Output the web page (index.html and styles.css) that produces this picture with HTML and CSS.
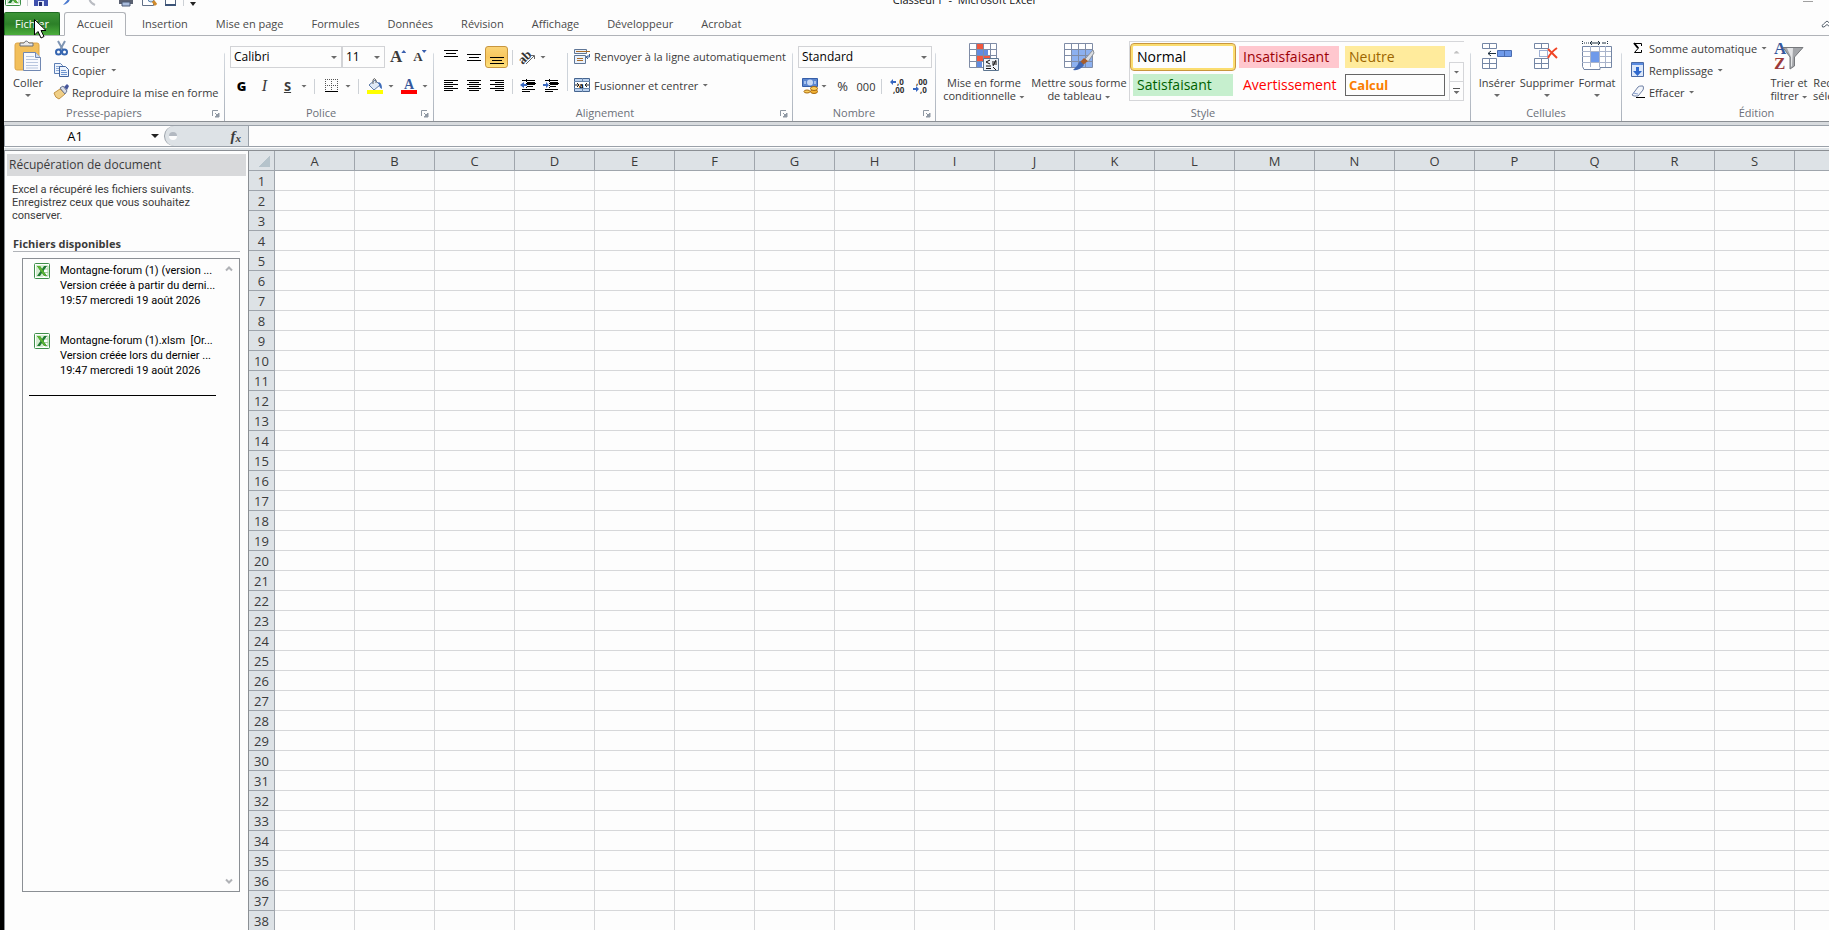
FILE: index.html
```html
<!DOCTYPE html>
<html lang="fr">
<head>
    <meta charset="UTF-8">
    <meta name="viewport" content="width=device-width, initial-scale=1.0">
    <title>Classeur1 - Microsoft Excel</title>
    <link rel="stylesheet" href="styles.css">
</head>
<body>
    <!-- shared icons -->
    <svg class="symbols" width="0" height="0">
        <symbol id="excel" viewBox="0 0 16 16">
            <rect x="0.5" y="0.5" width="15" height="15" rx="1" fill="#fff" stroke="#3f8f4a"/>
            <path d="M2 2h9L9 14H2z" fill="#d5edd0"/>
            <path d="M11 3h3v10h-3M11 6h3M11 9.500h3" fill="none" stroke="#a5d3a0"/>
            <path d="M3 3h3l2 3 2-3h3L9.500 8l3.500 5h-3L8 10l-2 3H3l3.500-5z" fill="#1f7a33"/>
            <path d="M3 3h3l6.500 10h-2z" fill="#5cb531"/>
        </symbol>
        <symbol id="launcher" viewBox="0 0 8 8">
            <path d="M0.500 6V0.500H6" fill="none" stroke="#8f98a3"/>
            <path d="M3 3l3 3M7 3v4H3z" fill="#8f98a3" stroke="#8f98a3"/>
        </symbol>
    </svg>

    <header class="title-bar">
        <div class="quick-access">
            <svg width="16" height="16"><use href="#excel"/></svg>
            <span class="sep"></span>
            <svg class="save" width="14" height="16"><path d="M0 2h14v14H0z" fill="#3f51ad"/><path d="M3 2h8v7H3zM4 11h6v5H4z" fill="#dfe6fa"/><path d="M5 12h3v4H5z" fill="#26306e"/></svg>
            <svg class="undo" width="14" height="16"><path d="M3 15q8-2 7-9l-3 1 2-5 5 3-3 1" fill="#4a79cf"/></svg>
            <svg class="redo" width="14" height="16"><path d="M9 15Q2 12 4 6" fill="none" stroke="#b9bcc2" stroke-width="2"/></svg>
            <svg class="print" width="16" height="16"><path d="M1 8h14v6H1z" fill="#5a6070"/><path d="M4 3h8v7H4z" fill="#dfe3ea"/><path d="M4 12h8v4H4z" fill="#a9bcdc" stroke="#4a5875"/></svg>
            <svg class="preview" width="15" height="16"><path d="M0.500 1.500h11v14H0.500z" fill="#fff" stroke="#627087"/><circle cx="9" cy="9" r="3" fill="#cfe2f4" stroke="#5f84ad"/><path d="M11 11l3 4" stroke="#d08a2c" stroke-width="3"/></svg>
            <svg class="new-doc" width="12" height="16"><path d="M0.500 1.500h10v14H0.500z" fill="#fff" stroke="#536580"/><path d="M0 15h11" stroke="#3c5478" stroke-width="2"/></svg>
            <span class="sep"></span>
            <span class="arrow dark"></span>
        </div>
        <div class="window-title">Classeur1&nbsp; -&nbsp; Microsoft Excel</div>
        <div class="window-buttons"><span class="minimize"></span></div>
    </header>

    <nav class="tabs">
        <button class="file-tab">Fichier</button>
        <button class="tab active">Accueil</button>
        <button class="tab">Insertion</button>
        <button class="tab">Mise en page</button>
        <button class="tab">Formules</button>
        <button class="tab">Données</button>
        <button class="tab">Révision</button>
        <button class="tab">Affichage</button>
        <button class="tab">Développeur</button>
        <button class="tab">Acrobat</button>
        <button class="collapse" aria-label="Réduire le ruban"><svg width="12" height="10"><path d="M1.500 8q-1-2 1-3L6 2l3.500 3q2 1 1 3L9 8 6 5.500 3 8z" fill="#fff" stroke="#55606c"/></svg></button>
    </nav>
    <svg class="cursor" width="13" height="20"><path d="M0.500 0.500v15.500l3.500-3.500 3 6.500 3-1.500-3-6h5z" fill="#fff" stroke="#000"/></svg>

    <section class="ribbon">
        <!-- Presse-papiers -->
        <div class="group clipboard">
            <div class="group-body">
                <button class="big">
                    <svg width="30" height="32" viewBox="0 0 30 32">
                        <rect x="2" y="3" width="24" height="27" rx="2" fill="#f2bf5b" stroke="#dca548"/>
                        <path d="M7 6V3h4q2-4 5 0h4v3z" fill="#e9e9ea" stroke="#6b6f75"/>
                        <path d="M10.500 12.500h12l5 5v13h-17z" fill="#f8fafe" stroke="#7188b2"/>
                        <path d="M22.500 12.500v5h5" fill="#cfdcf0" stroke="#7188b2"/>
                        <path d="M13 16.500h8M13 19.500h12M13 22.500h12M13 25.500h12M13 28h12" stroke="#b8c6de"/>
                    </svg>
                    <span>Coller</span><span class="arrow"></span>
                </button>
                <div class="stack">
                    <button class="small">
                        <svg width="16" height="16"><path d="M4 1l5 9M11 1L6 10" stroke="#7f95b3" stroke-width="2"/><circle cx="4.500" cy="12" r="2.500" fill="none" stroke="#3565b0" stroke-width="2"/><circle cx="10.500" cy="12" r="2.500" fill="none" stroke="#3565b0" stroke-width="2"/></svg>
                        Couper
                    </button>
                    <button class="small">
                        <svg width="16" height="16"><path d="M0.500 1.500h6l2 2v8h-8z" fill="#eef4fd" stroke="#5d7fb5"/><path d="M2 4.500h4M2 6.500h4M2 8.500h4" stroke="#8eabd6"/><path d="M5.500 4.500h6l3 3v7h-9z" fill="#eef4fd" stroke="#41649f"/><path d="M7 8.500h5M7 10.500h6M7 12.500h6" stroke="#6e95d0"/></svg>
                        Copier <span class="arrow"></span>
                    </button>
                    <button class="small">
                        <svg width="16" height="16"><path d="M0 9l6-4 5 5-6 5q-4-1-5-6z" fill="#f0cf86" stroke="#c39447"/><path d="M6 4l3-2 4 5-2 3z" fill="#d9dde6" stroke="#6c7791"/><path d="M10 3l3-3 2 2-2 4z" fill="#46569b"/></svg>
                        Reproduire la mise en forme
                    </button>
                </div>
            </div>
            <div class="group-label">Presse-papiers<svg class="launcher" width="8" height="8"><use href="#launcher"/></svg></div>
        </div>

        <!-- Police -->
        <div class="group font">
            <div class="group-body rows">
                <div class="row">
                    <label class="combo font-name"><select aria-label="Police"><option>Calibri</option></select></label>
                    <label class="combo font-size"><select aria-label="Taille"><option>11</option></select></label>
                    <button class="glyph grow">A<span class="up"></span></button>
                    <button class="glyph shrink">A<span class="down"></span></button>
                </div>
                <div class="row">
                    <button class="icon bold">G</button>
                    <button class="icon italic">I</button>
                    <button class="icon underline">S</button>
                    <span class="arrow"></span>
                    <span class="sep"></span>
                    <button class="icon borders"><svg width="14" height="14"><path d="M0.500 0v12M6.500 0v12M12.500 0v12M0 0.500h13M0 6.500h13" fill="none" stroke="#555" stroke-dasharray="1 1"/><path d="M0 12.500h13" stroke="#000"/></svg></button>
                    <span class="arrow"></span>
                    <span class="sep"></span>
                    <button class="icon fill"><svg width="16" height="16"><path d="M2 7l6-5 5 5-6 5z" fill="#dfe9f6" stroke="#5e7ba8"/><path d="M6 6V2q1-3 3 0v3" fill="none" stroke="#666"/><path d="M11 4q4 0 4 7-3-1-3-5z" fill="#3e6cb9"/><path d="M0 12h16v4H0z" fill="#ff0"/></svg></button>
                    <span class="arrow"></span>
                    <button class="icon color"><svg width="16" height="16"><text x="3" y="11" class="letter-a">A</text><path d="M0 12h16v4H0z" fill="#f00"/></svg></button>
                    <span class="arrow"></span>
                </div>
            </div>
            <div class="group-label">Police<svg class="launcher" width="8" height="8"><use href="#launcher"/></svg></div>
        </div>

        <!-- Alignement -->
        <div class="group alignment">
            <div class="group-body">
                <div class="align-icons">
                    <div class="row">
                        <button class="icon"><svg width="14" height="16"><path d="M0 1.500h14M2 4.500h10M0 7.500h14" stroke="#000"/></svg></button>
                        <button class="icon"><svg width="14" height="16"><path d="M0 5.500h14M2 8.500h10M0 11.500h14" stroke="#000"/></svg></button>
                        <button class="icon selected"><svg width="14" height="16"><path d="M0 8.500h14M2 11.500h10M0 14.500h14" stroke="#000"/></svg></button>
                        <span class="sep"></span>
                        <button class="icon angle"><svg width="16" height="16"><text x="-2" y="11" class="ab" transform="rotate(-45 6 9)">ab</text><path d="M5 15l8-8M10 6.500h3.500V10" fill="none" stroke="#666"/></svg></button>
                        <span class="arrow"></span>
                    </div>
                    <div class="row">
                        <button class="icon"><svg width="14" height="14"><path d="M0 1.500h14M0 3.500h9M0 5.500h14M0 7.500h9M0 9.500h14M0 11.500h9" stroke="#000"/></svg></button>
                        <button class="icon"><svg width="14" height="14"><path d="M0 1.500h14M2 3.500h10M0 5.500h14M2 7.500h10M0 9.500h14M2 11.500h10" stroke="#000"/></svg></button>
                        <button class="icon"><svg width="14" height="14"><path d="M0 1.500h14M5 3.500h9M0 5.500h14M5 7.500h9M0 9.500h14M5 11.500h9" stroke="#000"/></svg></button>
                        <span class="sep"></span>
                        <button class="icon"><svg width="16" height="14"><path d="M2 1.500h13M7 4.500h9M7 7.500h6M2 10.500h13M2 12.500h8" stroke="#000"/><path d="M6.500 0v14" stroke="#000" stroke-dasharray="1 1"/><path d="M7 3h8v3H7z"/><path d="M0 6l4-3v2h3v2H4v2z" fill="#3767c0"/></svg></button>
                        <button class="icon"><svg width="16" height="14"><path d="M2 1.500h13M7 4.500h9M7 7.500h6M2 10.500h13M2 12.500h8" stroke="#000"/><path d="M6.500 0v14" stroke="#000" stroke-dasharray="1 1"/><path d="M7 3h8v3H7z"/><path d="M6 6L3 3v2H0v2h3v2z" fill="#3767c0"/></svg></button>
                    </div>
                </div>
                <div class="align-texts">
                    <button class="small">
                        <svg width="16" height="16"><path d="M0.500 1.500h12v4H0.500zM0.500 7.500h11v8H0.500z" fill="#eaf1fb" stroke="#5f7697"/><path d="M2 3.500h14M3 10.500h6M3 12.500h6" stroke="#a86c2a"/><path d="M15.500 6v3h-3m2-1.500L12 9l2 2" fill="none" stroke="#345892"/></svg>
                        Renvoyer à la ligne automatiquement
                    </button>
                    <button class="small">
                        <svg width="16" height="16"><path d="M0.500 1.500h15v13H0.500z" fill="#b9d0ee" stroke="#46658f"/><path d="M1 5h14v6H1z" fill="#fff"/><path d="M0 4.500h16M0 11.500h16M8.500 1v3M8.500 12v3" stroke="#6987ae"/><path d="M1 8h4M3 6l2 2-2 2M15 8h-4M13 6l-2 2 2 2" fill="none" stroke="#222"/><text x="5" y="11" class="tiny-a">a</text></svg>
                        Fusionner et centrer <span class="arrow"></span>
                    </button>
                </div>
            </div>
            <div class="group-label">Alignement<svg class="launcher" width="8" height="8"><use href="#launcher"/></svg></div>
        </div>

        <!-- Nombre -->
        <div class="group number">
            <div class="group-body rows">
                <div class="row">
                    <label class="combo"><select aria-label="Format de nombre"><option>Standard</option></select></label>
                </div>
                <div class="row">
                    <button class="icon money"><svg width="16" height="16"><path d="M0.500 0.500h15v8H0.500z" fill="#5c86cf" stroke="#355ea8"/><circle cx="8" cy="4.500" r="3" fill="#c7d9f5"/><path d="M2 3h2v3H2zM12 3h2v3h-2z" fill="#a7c2ec"/><ellipse cx="12" cy="13.500" rx="3.500" ry="2" fill="#f2b233" stroke="#a8690f"/><ellipse cx="12" cy="10.500" rx="3.500" ry="2" fill="#fbd05e" stroke="#a8690f"/><ellipse cx="5" cy="13.500" rx="3" ry="1.500" fill="#fbd05e" stroke="#a8690f"/></svg></button>
                    <span class="arrow"></span>
                    <button class="icon percent">%</button>
                    <button class="icon thousands">000</button>
                    <span class="sep"></span>
                    <button class="icon"><svg width="16" height="16"><text x="7" y="7" class="digits">,0</text><text x="3" y="15" class="digits">,00</text><path d="M0 4l3-3v2h3v2H3v2z" fill="#3767c0"/></svg></button>
                    <button class="icon"><svg width="16" height="16"><text x="3" y="7" class="digits">,00</text><text x="7" y="15" class="digits">,0</text><path d="M6 11L3 8v2H0v2h3v2z" fill="#3767c0"/></svg></button>
                </div>
            </div>
            <div class="group-label">Nombre<svg class="launcher" width="8" height="8"><use href="#launcher"/></svg></div>
        </div>

        <!-- Style -->
        <div class="group style">
            <div class="group-body">
                <button class="big cond">
                    <svg width="30" height="32" viewBox="0 0 30 32">
                        <path d="M0.500 3.500h27v24h-27z" fill="#fff"/>
                        <path d="M7 3h7v6H7zM7 15h14v6H7z" fill="#f2583e"/><path d="M7 9h12v6H7zM7 21h6v7H7z" fill="#628ce0"/>
                        <path d="M0.500 3.500h27v24h-27zM7.500 3v24M14.500 3v24M21.500 3v24M0 9.500h28M0 15.500h28M0 21.500h28" fill="none" stroke="#7f8ca6"/>
                        <path d="M14.500 18.500h15v12h-15z" fill="#eef3f8" stroke="#5c7590"/>
                        <path d="M21 20l-4 2 4 2M17 26h5M17 28.500h5M23 22h5M23 24h5M27 20l-3 6M24 27l3 3" fill="none" stroke="#111"/>
                    </svg>
                    <span>Mise en forme</span><span>conditionnelle <i class="arrow"></i></span>
                </button>
                <button class="big table-style">
                    <svg width="30" height="32" viewBox="0 0 30 32">
                        <path d="M0.500 3.500h28v24h-28z" fill="#fff"/>
                        <path d="M7 9h21v18H7z" fill="#8cb0ef"/>
                        <path d="M0.500 3.500h28v24h-28zM7.500 3v24M14.500 3v24M21.500 3v24M0 9.500h28M0 15.500h28M0 21.500h28" fill="none" stroke="#7f8ca6"/>
                        <path d="M29 10l-8 9 3 3 6-9z" fill="#dadde2" stroke="#8b9097"/>
                        <path d="M20 18l-4 4 3 3 5-4z" fill="#a65c2a"/><path d="M16 21l4 4q-4 6-11 5 4-3 7-9z" fill="#3f67b4"/>
                    </svg>
                    <span>Mettre sous forme</span><span>de tableau <i class="arrow"></i></span>
                </button>
                <div class="gallery">
                    <div class="cells">
                        <button class="cell normal">Normal</button>
                        <button class="cell bad">Insatisfaisant</button>
                        <button class="cell neutral">Neutre</button>
                        <button class="cell good">Satisfaisant</button>
                        <button class="cell warning">Avertissement</button>
                        <button class="cell calc">Calcul</button>
                    </div>
                    <div class="scroll">
                        <button class="off" aria-label="Précédent"><span class="arrow flip"></span></button>
                        <button aria-label="Suivant"><span class="arrow"></span></button>
                        <button class="more" aria-label="Autres"><span class="arrow"></span></button>
                    </div>
                </div>
            </div>
            <div class="group-label">Style</div>
        </div>

        <!-- Cellules -->
        <div class="group cellules">
            <div class="group-body">
                <button class="big">
                    <svg width="30" height="32" viewBox="0 0 30 32"><path d="M0.500 3.500h14v5H0.500zM7.500 3v5M0.500 18.500h14v10H0.500zM7.500 18v10M0 23.500h14" fill="#fff" stroke="#7486a5"/><path d="M15.500 10.500h14v6h-14z" fill="#6f9aea" stroke="#4a6cb0"/><path d="M22.500 11v5" stroke="#4a6cb0"/><path d="M6 13.500h8M9 11l-3 2.500L9 16" fill="none" stroke="#1d3040"/></svg>
                    <span>Insérer</span><span class="arrow"></span>
                </button>
                <button class="big">
                    <svg width="30" height="32" viewBox="0 0 30 32"><path d="M2.500 3.500h14v5H2.500zM9.500 3v5M2.500 18.500h14v10H2.500zM9.500 18v10M2 23.500h14" fill="#fff" stroke="#7486a5"/><path d="M7.500 10.500h8v6h-8z" fill="none" stroke="#3e62aa" stroke-dasharray="1 1"/><path d="M16 9l9 9M25 8q-6 4-9 10" fill="none" stroke="#f04526" stroke-width="2"/></svg>
                    <span>Supprimer</span><span class="arrow"></span>
                </button>
                <button class="big">
                    <svg width="30" height="32" viewBox="0 0 30 32"><path d="M0.500 6.500h29v21H18v2H2l-1.500-3z" fill="#fff" stroke="#7486a5"/><path d="M0 11.500h29M0 22.500h29M8.500 6v21M17.500 6v21M23.500 6v21M0 16.500h29" stroke="#a9b4cb"/><path d="M9 12h8v10H9z" fill="#6f9aea"/><path d="M0.500 1v4M25.500 1v4M2 3h5" stroke="#1d3040" stroke-dasharray="1 1"/><path d="M8 3h10M10 1L8 3l2 2M16 1l2 2-2 2M20 3h4" fill="none" stroke="#1d3040"/></svg>
                    <span>Format</span><span class="arrow"></span>
                </button>
            </div>
            <div class="group-label">Cellules</div>
        </div>

        <!-- Édition -->
        <div class="group edition">
            <div class="group-body">
                <div class="stack">
                    <button class="small"><svg width="14" height="16"><path d="M10.500 6V3.500h-7L7.500 8l-4 4.500h7V10" fill="none" stroke="#000"/><path d="M3 3l4 5" stroke="#000" stroke-width="2"/></svg>Somme automatique <span class="arrow"></span></button>
                    <button class="small"><svg width="14" height="16"><path d="M0.500 0.500h12v14H0.500z" fill="#dce8fa" stroke="#4a6aa5"/><path d="M1 1h11v2H1z" fill="#5a8be0"/><path d="M5 5h3v4h3l-4.500 5L2 9h3z" fill="#2f69cd"/></svg>Remplissage <span class="arrow"></span></button>
                    <button class="small"><svg width="14" height="16"><path d="M1 11l6-8q1-1 3-1h2q1 2 0 4l-5 6H3z" fill="#f3f6fb" stroke="#6f80a4"/><path d="M2 9l5 1" stroke="#8ca3d0"/><path d="M5 13.500h9" stroke="#000"/></svg>Effacer <span class="arrow"></span></button>
                </div>
                <button class="big sort">
                    <svg width="30" height="32" viewBox="0 0 30 32"><text x="0" y="14" class="sort-a">A</text><text x="0" y="29" class="sort-z">Z</text><path d="M9 7.500h20L20.500 17v9L16 29V17z" fill="#a4a6aa" stroke="#77797d"/><path d="M13 8h6l-1 18-1 1V17z" fill="#e3e4e6"/></svg>
                    <span>Trier et</span><span>filtrer <i class="arrow"></i></span>
                </button>
                <button class="big find">
                    <svg width="30" height="32"></svg>
                    <span>Rechercher et</span><span>sélectionner <i class="arrow"></i></span>
                </button>
            </div>
            <div class="group-label">Édition</div>
        </div>
    </section>

    <div class="formula-bar">
        <input class="name-box" aria-label="Zone Nom" value="A1">
        <span class="arrow dark"></span>
        <div class="fx"><span class="knob"></span><i>f</i><i class="x">x</i></div>
        <input class="formula" aria-label="Barre de formule">
    </div>

    <main class="workspace">
        <aside class="recovery">
            <h2>Récupération de document</h2>
            <p>Excel a récupéré les fichiers suivants. Enregistrez ceux que vous souhaitez conserver.</p>
            <h3>Fichiers disponibles</h3>
            <div class="file-list">
                <div class="files">
                    <div class="file">
                        <svg width="16" height="16"><use href="#excel"/></svg>
                        <div>Montagne-forum (1) (version ...<br>Version créée à partir du derni...<br>19:57 mercredi 19 août 2026</div>
                    </div>
                    <div class="file">
                        <svg width="16" height="16"><use href="#excel"/></svg>
                        <div>Montagne-forum (1).xlsm&nbsp; [Or...<br>Version créée lors du dernier ...<br>19:47 mercredi 19 août 2026</div>
                    </div>
                    <hr>
                </div>
                <div class="list-scroll">
                    <svg width="8" height="8"><path d="M1 5.500l3-3 3 3" fill="none" stroke="#b0b2b6" stroke-width="2"/></svg>
                    <svg width="8" height="8"><path d="M1 2.500l3 3 3-3" fill="none" stroke="#b0b2b6" stroke-width="2"/></svg>
                </div>
            </div>
        </aside>
        <div class="sheet">
            <table>
                <thead><tr id="letters"><th class="corner"></th></tr></thead>
                <tbody id="rows"></tbody>
            </table>
        </div>
    </main>
    <script src="script.js"></script>
</body>
</html>
```
FILE: styles.css
```css
* {
    box-sizing: border-box;
}

body {
    margin: 0;
    height: 100vh;
    display: flex;
    flex-direction: column;
    overflow: hidden;
    border-left: 4px solid #000;
    background-color: #fdfdfd;
    color: #3b3b3b;
    font-family: "Open Sans", "Noto Sans", sans-serif;
    font-size: 11px;
}

button, input, select {
    font: inherit;
    color: inherit;
    background: none;
    border: none;
    padding: 0;
    margin: 0;
    border-radius: 0;
    outline: none;
}

svg {
    display: block;
    flex: none;
    overflow: visible;
}

.symbols {
    position: absolute;
}

.arrow {
    display: inline-block;
    flex: none;
    width: 6px;
    height: 3px;
    background-color: #6b6b6b;
    clip-path: polygon(0 0, 100% 0, 50% 100%);
    vertical-align: middle;
}

.arrow.dark {
    background-color: #222;
    width: 8px;
    height: 4px;
}

.arrow.flip {
    clip-path: polygon(50% 0, 100% 100%, 0 100%);
}

.sep {
    flex: none;
    width: 1px;
    height: 15px;
    background-color: #cdd1d6;
}

/* title bar */
.title-bar {
    display: flex;
    align-items: flex-end;
    height: 12px;
    flex: none;
}

.quick-access {
    display: flex;
    align-items: center;
    width: 196px;
    height: 16px;
    margin-bottom: 6px;
    padding-left: 1px;
    flex: none;
}

.quick-access .sep {
    margin: 0 6px;
}

.quick-access .undo,
.quick-access .redo {
    margin-left: 12px;
}

.quick-access .print {
    margin-left: 18px;
}

.quick-access .preview,
.quick-access .new-doc {
    margin-left: 8px;
}

.quick-access .arrow {
    width: 6px;
    margin-top: 12px;
}

.window-title {
    flex: 1;
    text-align: center;
    color: #111;
    font-size: 11px;
    line-height: 16px;
    margin-bottom: 4px;
}

.window-buttons {
    width: 101px;
    height: 12px;
    padding: 1px 0 0 75px;
}

.minimize {
    display: block;
    width: 10px;
    height: 1px;
    background-color: #a0a0a0;
}

/* tabs */
.tabs {
    display: flex;
    height: 24px;
    flex: none;
    border-bottom: 1px solid #b0b3b8;
}

.file-tab {
    width: 56px;
    height: 23px;
    padding-bottom: 1px;
    border: 1px solid #1f6b22;
    border-bottom: none;
    border-radius: 2px 2px 0 0;
    background: linear-gradient(#3d9438, #2c8028 50%, #4cae3c);
    color: #fff;
    margin-right: 4px;
}

.tab {
    height: 24px;
    padding: 0 14px 2px;
    color: #4a4a4a;
}

.tab.active {
    padding: 0 12px 2px;
    margin-right: 2px;
    border: 1px solid #b0b3b8;
    border-bottom-color: #fdfdfd;
    border-radius: 3px 3px 0 0;
    background-color: #fdfdfd;
}

.collapse {
    margin-left: auto;
    margin-right: -4px;
}

.cursor {
    position: absolute;
    left: 34px;
    top: 19px;
}

/* ribbon */
.ribbon {
    display: flex;
    flex: none;
    height: 86px;
    border-bottom: 1px solid #8b8f94;
    overflow: hidden;
}

.group {
    display: flex;
    flex-direction: column;
    flex: none;
    border-right: 1px solid;
    border-image: linear-gradient(transparent 20%, #d5dae0 22%, #a9b0ba) 1;
}

.clipboard { width: 221px; }
.font { width: 209px; }
.alignment { width: 359px; }
.number { width: 143px; }
.style { width: 535px; }
.cellules { width: 151px; }
.edition { width: 270px; }

.group-body {
    display: flex;
    height: 68px;
}

.group-label {
    display: flex;
    align-items: center;
    justify-content: center;
    position: relative;
    height: 16px;
    padding-right: 16px;
    color: #6c7079;
}

.style .group-label,
.cellules .group-label,
.edition .group-label {
    padding-right: 0;
}

.launcher {
    position: absolute;
    right: 4px;
    top: 6px;
}

.big {
    display: flex;
    flex-direction: column;
    align-items: center;
    padding-top: 4px;
    line-height: 13px;
    white-space: nowrap;
    flex: none;
}

.big svg {
    margin-bottom: 4px;
}

.big > .arrow {
    margin-top: 5px;
}

.stack {
    display: flex;
    flex-direction: column;
    padding-top: 1px;
}

.small {
    display: flex;
    align-items: center;
    gap: 4px;
    height: 22px;
    white-space: nowrap;
}

.rows {
    flex-direction: column;
}

.row {
    display: flex;
    align-items: center;
    height: 22px;
}

.rows,
.align-icons,
.align-texts {
    display: flex;
    flex-direction: column;
    gap: 7px;
    padding-top: 10px;
}

.align-texts .small {
    padding-bottom: 2px;
}

.clipboard .big {
    width: 42px;
    padding-left: 6px;
}

.clipboard .stack {
    padding-left: 8px;
}

.clipboard .small {
    gap: 2px;
}

.clipboard .small .arrow {
    margin-left: 3px;
}

.clipboard .group-label,
.number .group-label {
    padding-right: 20px;
}

/* fonts */
.font .row {
    padding-left: 5px;
}

.combo {
    position: relative;
    display: flex;
    height: 22px;
    border: 1px solid #d2d3d6;
    color: #000;
}

.combo select {
    appearance: none;
    width: 100%;
    padding: 0 3px 1px;
    font-size: 12px;
}

.combo::after {
    content: "";
    position: absolute;
    right: 4px;
    top: 9px;
    width: 6px;
    height: 3px;
    background-color: #6b6b6b;
    clip-path: polygon(0 0, 100% 0, 50% 100%);
}

.font-name { width: 112px; }
.font-size { width: 43px; }
.number .combo { width: 134px; }

.glyph {
    position: relative;
    font-family: "Liberation Serif", serif;
    font-weight: bold;
    line-height: 22px;
}

.grow {
    font-size: 17px;
    margin-left: 5px;
}

.shrink {
    font-size: 13px;
    margin-left: 11px;
}

.up,
.down {
    position: absolute;
    top: 4px;
    right: -4px;
    width: 5px;
    height: 3px;
    background-color: #3a5fae;
    clip-path: polygon(50% 0, 100% 100%, 0 100%);
}

.down {
    clip-path: polygon(0 0, 100% 0, 50% 100%);
}

.icon {
    display: flex;
    align-items: center;
    justify-content: center;
    width: 23px;
    height: 22px;
    flex: none;
}

.bold {
    color: #000;
    font-size: 13px;
    font-weight: 800;
}

.italic {
    font-family: "Liberation Serif", serif;
    font-size: 16px;
    font-style: italic;
}

.underline {
    font-size: 13px;
    font-weight: bold;
    text-decoration: underline;
}

.font .icon + .arrow {
    margin-left: 2px;
}

.font .sep {
    margin: 0 5px 0 7px;
}

.font .fill {
    width: 22px;
}

.font .color {
    margin-left: 3px;
}

.letter-a {
    font: bold 14px "Liberation Serif", serif;
    fill: #35589c;
}

/* alignment */
.align-icons {
    width: 133px;
    padding-left: 5px;
}

.alignment .sep {
    margin: 0 3px 0 4px;
}

.align-icons .icon.angle {
    margin-left: 2px;
    width: 22px;
}

.selected {
    border: 1px solid #c8963e;
    border-radius: 3px;
    background: linear-gradient(#fbd476, #f9c75f 50%, #fee27c);
}

.ab {
    font: bold 13px "Liberation Serif", serif;
    fill: #333;
}

.tiny-a {
    font: bold 9px "Liberation Serif", serif;
}

.align-texts {
    padding-left: 7px;
    background: linear-gradient(#cdd3da, #cdd3da) 0 17px / 1px 38px no-repeat;
}

/* number */
.number .row {
    padding-left: 5px;
}

.number .icon {
    color: #333;
}

.number .sep {
    margin: 0 4px;
}

.number .percent {
    margin-left: 4px;
    font-size: 13px;
}

.number .thousands {
    padding-left: 1px;
}

.digits {
    font: bold 8px "Open Sans", sans-serif;
    fill: #333;
}

/* styles gallery */
.cond {
    width: 96px;
}

.table-style {
    width: 94px;
}

.gallery {
    display: flex;
    width: 335px;
    height: 60px;
    margin: 5px 0 0 3px;
    border: 1px solid #d5d6d9;
    border-right: none;
}

.cells {
    display: grid;
    grid-template-columns: repeat(3, 100px);
    grid-auto-rows: 22px;
    gap: 6px;
    padding: 4px 3px;
    width: 319px;
}

.cell {
    padding-left: 4px;
    font-size: 14px;
    text-align: left;
    line-height: 20px;
}

.normal {
    color: #000;
    outline: 1px solid #c8963e;
    outline-offset: 2px;
    border-radius: 1px;
    box-shadow: 0 0 0 2px #fbdd70;
}

.bad { background-color: #ffc7ce; color: #9c0006; }
.neutral { background-color: #ffeb9c; color: #9c6500; }
.good { background-color: #c6efce; color: #006100; }
.warning { color: #f00; }

.calc {
    border: 1px solid #666;
    color: #fa7d00;
    font-weight: bold;
    font-size: 13px;
    padding-left: 3px;
}

.scroll {
    display: flex;
    flex-direction: column;
    width: 15px;
}

.scroll button {
    display: flex;
    align-items: center;
    justify-content: center;
    height: 19px;
    border: 1px solid #d5d6d9;
    border-bottom: none;
}

.scroll .off {
    height: 20px;
    border: none;
    opacity: 0.4;
}

.scroll .more {
    flex-direction: column;
    gap: 2px;
}

.scroll .more::before {
    content: "";
    width: 7px;
    height: 1px;
    background-color: #555;
}

.cellules .group-body {
    padding-left: 1px;
}

.cellules .big {
    width: 50px;
}

.edition .stack {
    width: 145px;
    padding-left: 9px;
}

.edition .small {
    gap: 4px;
}

.sort {
    width: 44px;
}

.find {
    width: 76px;
}

.sort-a,
.sort-z {
    font: bold 17px "Liberation Serif", serif;
    fill: #35589c;
}

.sort-z {
    fill: #9b3a3a;
}

/* formula bar */
.formula-bar {
    display: flex;
    align-items: center;
    flex: none;
    height: 22px;
    margin-top: 3px;
    border: 1px solid #9aa1a9;
    border-right: none;
    box-shadow: 0 -3px #d8dbde;
}

.name-box {
    width: 140px;
    color: #000;
    font-size: 13px;
    text-align: center;
}

.formula-bar .arrow {
    margin: 0 5px 0 6px;
}

.fx {
    display: flex;
    align-items: center;
    width: 85px;
    height: 20px;
    padding: 0 7px 0 4px;
    border-left: 1px solid #9aa1a9;
    border-right: 1px solid #9aa1a9;
    border-radius: 10px 0 0 10px;
    background-color: #dde2e6;
    font-family: "Liberation Serif", serif;
    font-size: 15px;
    font-weight: bold;
}

.fx .x {
    font-size: 11px;
    margin-top: 4px;
}

.knob {
    width: 8px;
    height: 8px;
    margin-right: auto;
    border-radius: 4px;
    background: linear-gradient(#b3b9c1 50%, #fdfdfd 50%);
}

.formula {
    flex: 1;
}

/* workspace */
.workspace {
    display: flex;
    flex: 1;
    min-height: 0;
    margin-top: 1px;
    border-top: 2px solid #dde2e6;
    box-shadow: inset 0 1px #8b8f94;
    padding-top: 1px;
}

.recovery {
    display: flex;
    flex-direction: column;
    width: 245px;
    flex: none;
    padding: 3px 2px 38px;
    border-left: 1px solid #8b8f94;
    border-right: 1px solid #8b8f94;
}

.recovery h2 {
    margin: 0;
    padding-left: 2px;
    height: 22px;
    background-color: #d8d9db;
    font-size: 12px;
    font-weight: normal;
    line-height: 22px;
}

.recovery p,
.file {
    font-family: Roboto, "Open Sans", sans-serif;
}

.recovery p {
    margin: 7px 30px 0 5px;
    line-height: 13px;
}

.recovery h3 {
    margin: 15px 6px 0;
    border-bottom: 1px solid #b0b3b8;
    font-size: 11px;
    line-height: 14px;
}

.file-list {
    display: flex;
    flex: 1;
    margin: 6px 6px 0 15px;
    border: 1px solid #8b8f94;
    color: #000;
}

.files {
    width: 193px;
    padding: 4px 0 0 6px;
}

.file {
    display: flex;
    gap: 10px;
    height: 70px;
    padding-left: 5px;
    line-height: 15px;
    white-space: nowrap;
}

.files hr {
    margin: -8px 0 0;
    border: none;
    border-top: 1px solid #000;
}

.list-scroll {
    display: flex;
    flex-direction: column;
    justify-content: space-between;
    padding: 6px 0 6px 9px;
}

/* grid */
.sheet {
    flex: 1;
    min-width: 0;
    overflow: hidden;
}

table {
    table-layout: fixed;
    width: 2106px;
    border-collapse: separate;
    border-spacing: 0;
}

th, td {
    width: 80px;
    height: 20px;
    padding: 0;
    border-right: 1px solid #d6d7d9;
    border-bottom: 1px solid #d6d7d9;
}

th {
    padding-top: 1px;
    background-color: #dde2e6;
    border-color: #9fa5ac;
    font-size: 13px;
    font-weight: normal;
    line-height: 18px;
}

th.corner {
    width: 26px;
    background: linear-gradient(135deg, transparent 50%, #b5c3cb 50%) 10px 5px / 11px 11px no-repeat #dde2e6;
}
```
FILE: script.js
```js
const letters = document.getElementById('letters');
const rows = document.getElementById('rows');

// Column headings A to Z
for (let c = 0; c < 26; c++) {
    const th = document.createElement('th');
    th.textContent = String.fromCharCode(65 + c);
    letters.appendChild(th);
}

// Numbered rows
for (let r = 1; r <= 60; r++) {
    const tr = document.createElement('tr');
    tr.innerHTML = '<th>' + r + '</th>' + '<td></td>'.repeat(26);
    rows.appendChild(tr);
}
```
